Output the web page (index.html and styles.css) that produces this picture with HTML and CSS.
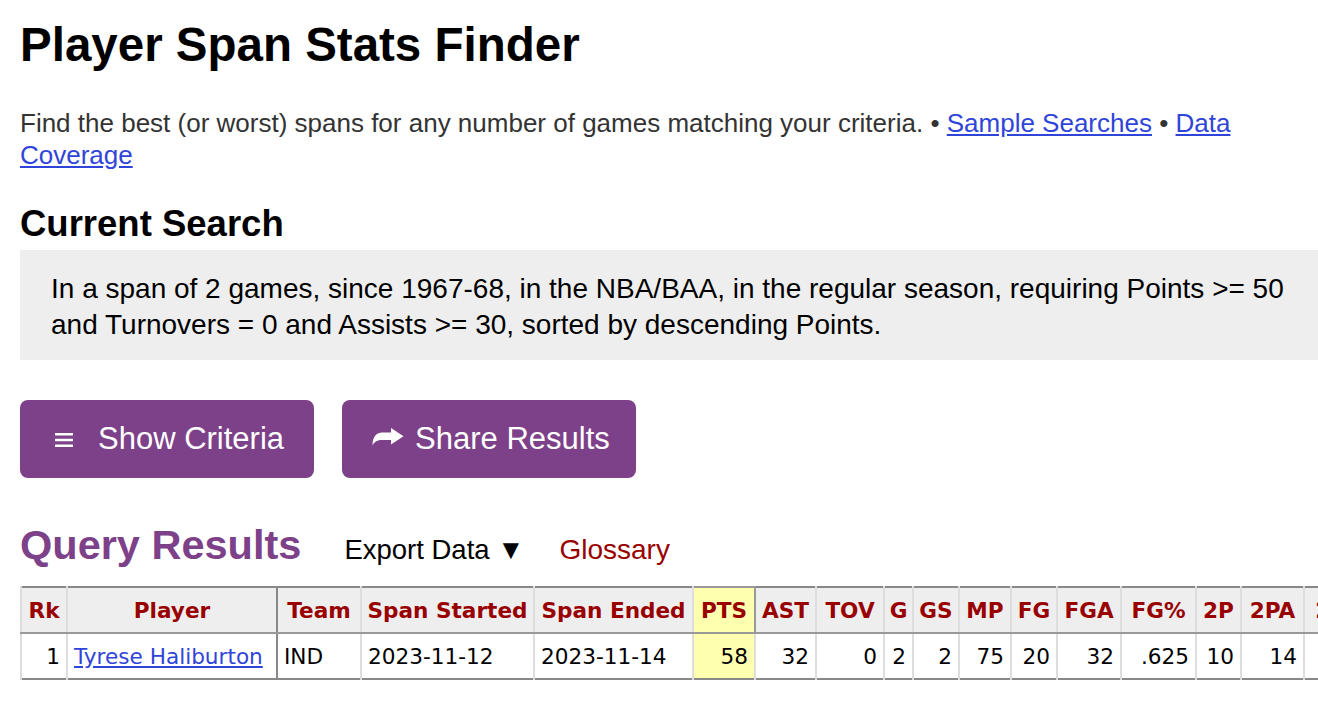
FILE: index.html
```html
<!DOCTYPE html>
<html lang="en">
<head>
<meta charset="utf-8">
<title>Player Span Stats Finder</title>
<link rel="stylesheet" href="styles.css">
</head>
<body>
<div class="page">
  <h1 class="title">Player Span Stats Finder</h1>
  <p class="intro">Find the best (or worst) spans for any number of games matching your criteria. • <a href="#">Sample Searches</a> • <a href="#">Data Coverage</a></p>

  <h2 class="section-title">Current Search</h2>
  <div class="search-box">In a span of 2 games, since 1967-68, in the NBA/BAA, in the regular season, requiring Points &gt;= 50 and Turnovers = 0 and Assists &gt;= 30, sorted by descending Points.</div>

  <div class="buttons">
    <button class="btn btn-criteria" type="button">
      <svg class="icon-menu" width="18" height="14" viewBox="0 0 18 14"><rect x="0" y="0" width="18" height="2.5" fill="#fff"/><rect x="0" y="5.75" width="18" height="2.5" fill="#fff"/><rect x="0" y="11.5" width="18" height="2.5" fill="#fff"/></svg>
      <span>Show Criteria</span>
    </button>
    <button class="btn btn-share" type="button">
      <svg class="icon-share" width="32" height="18" viewBox="0 0 32 18"><path d="M19 0 L31.5 8.3 L19 16.6 V12 H10 C5.5 12 2.5 13.5 0.5 17.5 C0.5 10 3.5 4.6 10.5 4.6 H19 Z" fill="#fff"/></svg>
      <span>Share Results</span>
    </button>
  </div>

  <div class="results-head">
    <h2 class="results-title">Query Results</h2>
    <span class="export">Export Data ▼</span>
    <a class="glossary" href="#">Glossary</a>
  </div>

  <div class="table-wrap">
    <table class="stats">
      <colgroup>
        <col class="w-rk">
        <col class="w-player">
        <col class="w-team">
        <col class="w-start">
        <col class="w-end">
        <col class="w-pts">
        <col class="w-ast">
        <col class="w-tov">
        <col class="w-g">
        <col class="w-gs">
        <col class="w-mp">
        <col class="w-fg">
        <col class="w-fga">
        <col class="w-pct">
        <col class="w-2p">
        <col class="w-2pa">
        <col class="w-pct">
        <col class="w-2p">
        <col class="w-2pa">
        <col class="w-pct">
        <col class="w-2p">
        <col class="w-2pa">
      </colgroup>
      <thead>
        <tr>
          <th>Rk</th>
          <th class="player-col">Player</th>
          <th>Team</th>
          <th>Span Started</th>
          <th>Span Ended</th>
          <th class="sort-col">PTS</th>
          <th>AST</th>
          <th>TOV</th>
          <th>G</th>
          <th>GS</th>
          <th>MP</th>
          <th>FG</th>
          <th>FGA</th>
          <th>FG%</th>
          <th>2P</th>
          <th>2PA</th>
          <th>2P%</th>
          <th>3P</th>
          <th>3PA</th>
          <th>3P%</th>
          <th>FT</th>
          <th>FTA</th>
        </tr>
      </thead>
      <tbody>
        <tr>
          <td class="num">1</td>
          <td class="player-col"><a href="#">Tyrese Haliburton</a></td>
          <td>IND</td>
          <td>2023-11-12</td>
          <td>2023-11-14</td>
          <td class="num sort-col">58</td>
          <td class="num">32</td>
          <td class="num">0</td>
          <td class="num">2</td>
          <td class="num">2</td>
          <td class="num">75</td>
          <td class="num">20</td>
          <td class="num">32</td>
          <td class="num">.625</td>
          <td class="num">10</td>
          <td class="num">14</td>
          <td class="num">.714</td>
          <td class="num">10</td>
          <td class="num">18</td>
          <td class="num">.556</td>
          <td class="num">8</td>
          <td class="num">9</td>
        </tr>
      </tbody>
    </table>
  </div>
</div>
</body>
</html>
```

FILE: styles.css
```css
html, body {
  margin: 0;
  padding: 0;
  background: #fff;
}

body {
  font-family: "Liberation Sans", Arial, Helvetica, sans-serif;
  color: #000;
  overflow: hidden;
}

.page {
  padding: 18px 0 0 20px;
  overflow: hidden;
}

.title {
  margin: 0;
  font-size: 47.5px;
  line-height: 54px;
  font-weight: bold;
}

.intro {
  margin: 35px 0 0;
  font-size: 26px;
  line-height: 32px;
  color: #333;
}

.intro a {
  color: #2f45d9;
}

.section-title {
  margin: 32px 0 0;
  font-size: 36.5px;
  line-height: 42px;
  font-weight: bold;
}

.search-box {
  margin-top: 5px;
  background: #eee;
  padding: 21px 20px 17px 31px;
  font-size: 28px;
  line-height: 36px;
}

.buttons {
  margin-top: 40px;
  display: flex;
  gap: 28px;
}

.btn {
  height: 78px;
  padding: 0 30px;
  border: 0;
  border-radius: 8px;
  background: #7d4189;
  color: #fff;
  font-family: "Liberation Sans", Arial, sans-serif;
  font-size: 31px;
  display: flex;
  align-items: center;
}

.btn-share {
  padding-right: 26px;
}

.icon-menu {
  margin: 2px 25px 0 5px;
}

.icon-share {
  margin: 0 11px 4px 0;
}

.results-head {
  margin-top: 43px;
  display: flex;
  align-items: baseline;
  line-height: 48px;
}

.results-title {
  margin: 0;
  font-size: 41.5px;
  font-weight: bold;
  color: #7d4189;
}

.export {
  margin-left: 43px;
  font-size: 27.5px;
}

.glossary {
  margin-left: 35px;
  font-size: 28px;
  color: #990000;
  text-decoration: none;
}

.table-wrap {
  margin-top: 12px;
  overflow: hidden;
}

.stats {
  table-layout: fixed;
  width: 1649px;
  border-collapse: collapse;
  font-family: "DejaVu Sans", Verdana, sans-serif;
  font-size: 21.6px;
  line-height: 33px;
  white-space: nowrap;
  border-top: 2px solid #888;
  border-bottom: 2px solid #888;
  border-left: 2px solid #888;
}

.w-rk { width: 46px; }
.w-player { width: 210px; }
.w-team { width: 84px; }
.w-start { width: 173px; }
.w-end { width: 159px; }
.w-pts { width: 62px; }
.w-ast { width: 61px; }
.w-tov { width: 68px; }
.w-g { width: 29px; }
.w-gs { width: 46px; }
.w-mp { width: 52px; }
.w-fg { width: 46px; }
.w-fga { width: 64px; }
.w-pct { width: 75px; }
.w-2p { width: 45px; }
.w-2pa { width: 63px; }

.stats th,
.stats td {
  border-left: 2px solid #ddd;
  border-right: 2px solid #ddd;
  padding: 5.5px 6px;
  overflow: visible;
}

.stats th {
  background: #eee;
  color: #990000;
  font-weight: bold;
  text-align: center;
  padding-left: 3px;
  padding-right: 3px;
  border-bottom: 2px solid #999;
}

.stats td {
  text-align: left;
}

.stats td.num {
  text-align: right;
}

.stats .player-col {
  border-right: 2px solid #888;
}

.stats a {
  color: #2f45d9;
}

.stats th.sort-col {
  background: #ffffb0;
  border: 2px solid #999;
}

.stats td.sort-col {
  background: #ffffb0;
}
```
